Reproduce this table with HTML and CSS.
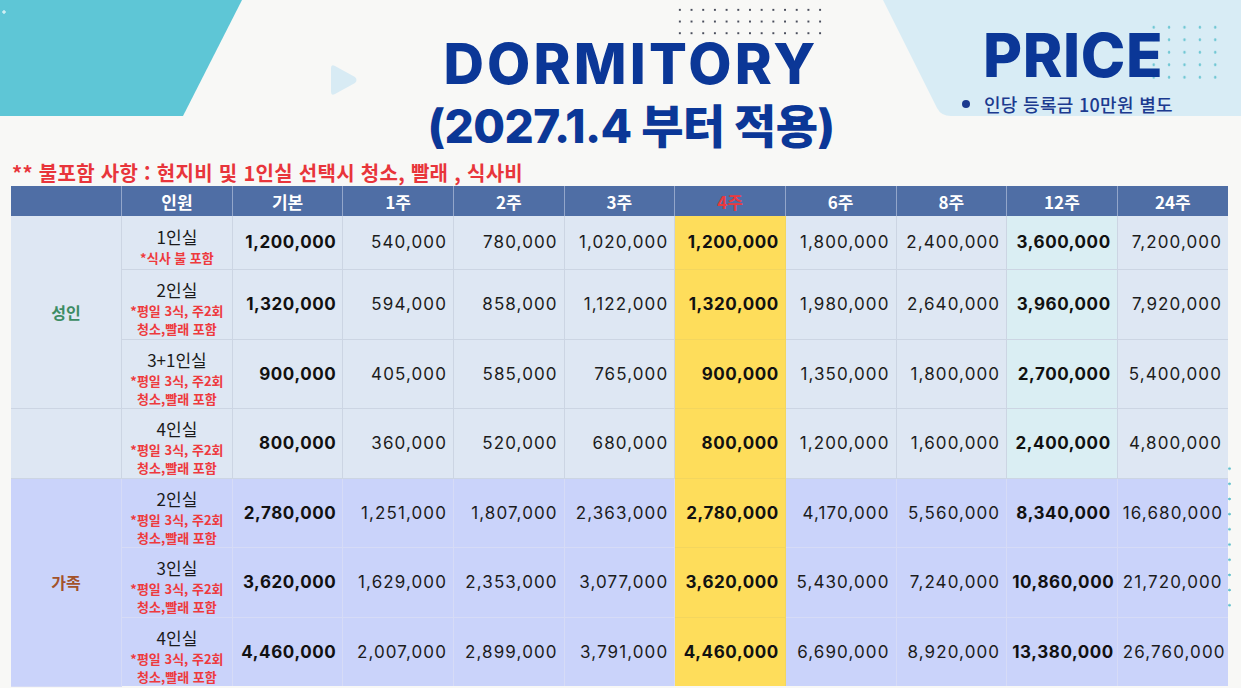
FILE: index.html
```html
<!DOCTYPE html>
<html lang="ko">
<head>
<meta charset="utf-8">
<title>Dormitory Price</title>
<link rel="stylesheet" href="styles.css">
</head>
<body>
<div class="page">
  <header class="header">
    <div class="deco-left"></div>
    <svg class="deco-play" viewBox="0 0 32 34" width="32" height="34"><path d="M4 5 Q4 1 8 3 L28 14 Q31 17 28 20 L8 31 Q4 33 4 29 Z" fill="#d8ebf4"/></svg>
    <div class="deco-dots-top"></div>
    <div class="title-block">
      <div class="title-main">DORMITORY</div>
      <div class="title-sub">(2027.1.4 부터 적용)</div>
    </div>
    <div class="panel">
      <div class="panel-dots"></div>
      <div class="price">PRICE</div>
      <div class="bullet"><span class="dot"></span>인당 등록금 10만원 별도</div>
    </div>
  </header>
  <p class="note">** 불포함 사항 : 현지비 및 1인실 선택시 청소, 빨래 , 식사비</p>
  <table class="price-table">
    <thead>
      <tr class="head-row">
        <th></th><th>인원</th><th>기본</th><th>1주</th><th>2주</th><th>3주</th><th class="red">4주</th><th>6주</th><th>8주</th><th>12주</th><th>24주</th>
      </tr>
    </thead>
    <tbody>
      <tr class="adult r1">
        <td class="group green" rowspan="3">성인</td>
        <td class="room">1인실<span class="sub">*식사 불 포함</span></td>
        <td class="num b">1,200,000</td><td class="num">540,000</td><td class="num">780,000</td><td class="num">1,020,000</td><td class="num b y">1,200,000</td><td class="num">1,800,000</td><td class="num">2,400,000</td><td class="num b c12">3,600,000</td><td class="num">7,200,000</td>
      </tr>
      <tr class="adult r2">
        <td class="room">2인실<span class="sub">*평일 3식, 주2회</span><span class="sub">청소,빨래 포함</span></td>
        <td class="num b">1,320,000</td><td class="num">594,000</td><td class="num">858,000</td><td class="num">1,122,000</td><td class="num b y">1,320,000</td><td class="num">1,980,000</td><td class="num">2,640,000</td><td class="num b c12">3,960,000</td><td class="num">7,920,000</td>
      </tr>
      <tr class="adult r3">
        <td class="room">3+1인실<span class="sub">*평일 3식, 주2회</span><span class="sub">청소,빨래 포함</span></td>
        <td class="num b">900,000</td><td class="num">405,000</td><td class="num">585,000</td><td class="num">765,000</td><td class="num b y">900,000</td><td class="num">1,350,000</td><td class="num">1,800,000</td><td class="num b c12">2,700,000</td><td class="num">5,400,000</td>
      </tr>
      <tr class="adult r4">
        <td class="group cont"></td>
        <td class="room">4인실<span class="sub">*평일 3식, 주2회</span><span class="sub">청소,빨래 포함</span></td>
        <td class="num b">800,000</td><td class="num">360,000</td><td class="num">520,000</td><td class="num">680,000</td><td class="num b y">800,000</td><td class="num">1,200,000</td><td class="num">1,600,000</td><td class="num b c12">2,400,000</td><td class="num">4,800,000</td>
      </tr>
      <tr class="family r5">
        <td class="group brown" rowspan="3">가족</td>
        <td class="room">2인실<span class="sub">*평일 3식, 주2회</span><span class="sub">청소,빨래 포함</span></td>
        <td class="num b">2,780,000</td><td class="num">1,251,000</td><td class="num">1,807,000</td><td class="num">2,363,000</td><td class="num b y">2,780,000</td><td class="num">4,170,000</td><td class="num">5,560,000</td><td class="num b">8,340,000</td><td class="num">16,680,000</td>
      </tr>
      <tr class="family r6">
        <td class="room">3인실<span class="sub">*평일 3식, 주2회</span><span class="sub">청소,빨래 포함</span></td>
        <td class="num b">3,620,000</td><td class="num">1,629,000</td><td class="num">2,353,000</td><td class="num">3,077,000</td><td class="num b y">3,620,000</td><td class="num">5,430,000</td><td class="num">7,240,000</td><td class="num b">10,860,000</td><td class="num">21,720,000</td>
      </tr>
      <tr class="family r7">
        <td class="room">4인실<span class="sub">*평일 3식, 주2회</span><span class="sub">청소,빨래 포함</span></td>
        <td class="num b">4,460,000</td><td class="num">2,007,000</td><td class="num">2,899,000</td><td class="num">3,791,000</td><td class="num b y">4,460,000</td><td class="num">6,690,000</td><td class="num">8,920,000</td><td class="num b">13,380,000</td><td class="num">26,760,000</td>
      </tr>
    </tbody>
  </table>
  <div class="deco-dots-side"></div>
</div>
</body>
</html>
```

FILE: styles.css
```css
* { box-sizing: border-box; }

body {
  margin: 0;
  background: #f8f8f6;
  font-family: "Noto Sans", "Noto Sans CJK KR", sans-serif;
}

.page {
  position: relative;
  width: 1241px;
  height: 688px;
  overflow: hidden;
}

/* ---------- header ---------- */
.header {
  position: relative;
  display: flex;
  align-items: flex-start;
  height: 160px;
}

.deco-left {
  flex: none;
  width: 242px;
  height: 116px;
  background:
    radial-gradient(circle at 4px 12px, #cfeef3 1.4px, transparent 2px),
    #5ec6d6;
  clip-path: polygon(0 0, 242px 0, 183px 116px, 0 116px);
}

.deco-play {
  position: absolute;
  left: 327px;
  top: 63px;
}

.deco-dots-top {
  position: absolute;
  left: 674px;
  top: 4px;
  width: 152px;
  height: 35px;
  background-image: radial-gradient(circle, #4a4e5c 0.9px, transparent 1.4px);
  background-size: 11.7px 11.7px;
}

.title-block {
  flex: 1;
  padding: 36px 0 0 145px;
  text-align: center;
  font-family: Inter, "Noto Sans CJK KR", sans-serif;
  font-weight: 800;
  color: #0b3797;
}

.title-main {
  font-size: 56px;
  line-height: 57px;
  letter-spacing: 3.2px;
}

.title-sub {
  font-size: 46px;
  line-height: 66px;
  letter-spacing: -0.6px;
}

.panel {
  position: relative;
  flex: none;
  width: 366px;
  height: 116px;
  padding: 25px 0 0 108px;
  background: #d8ecf5;
  clip-path: path('M8 0 L366 0 L366 116 L76 116 Q66 116 62 108 Z');
}

.panel-dots {
  position: absolute;
  left: 271px;
  top: 21px;
  width: 77px;
  height: 63px;
  background-image: radial-gradient(circle, #6cc6d2 1px, transparent 1.6px);
  background-size: 15.4px 12.5px;
}

.price {
  position: relative;
  font-family: Inter, sans-serif;
  font-weight: 800;
  font-size: 60px;
  line-height: 60px;
  letter-spacing: 0.6px;
  color: #0b3797;
}

.bullet {
  position: relative;
  display: flex;
  align-items: center;
  gap: 14px;
  margin: 8px 0 0 -21px;
  font-family: "Noto Sans CJK KR", sans-serif;
  font-size: 18px;
  font-weight: 500;
  line-height: 22px;
  letter-spacing: 0.3px;
  color: #1b3a8f;
}

.bullet .dot {
  width: 8px;
  height: 8px;
  border-radius: 50%;
  background: #1b3a8f;
}

/* ---------- note ---------- */
.note {
  margin: 0 0 0 12px;
  height: 26px;
  font-family: "Noto Sans CJK KR", sans-serif;
  font-size: 20px;
  font-weight: 700;
  line-height: 26px;
  letter-spacing: 0.3px;
  color: #e8353b;
}

/* ---------- table ---------- */
.price-table {
  margin-left: 11px;
  width: 1217px;
  border-collapse: collapse;
  table-layout: fixed;
}

.price-table th {
  height: 30px;
  padding: 0;
  background: #4f6ea5;
  color: #ffffff;
  font-family: "Noto Sans CJK KR", sans-serif;
  font-size: 17px;
  font-weight: 700;
  text-align: center;
  border-left: 1px solid #93a6ca;
}

.price-table th:first-child { border-left: none; }

.price-table th.red { color: #ea3a3e; }

.price-table td {
  border: 1px solid #ccd5e3;
  padding: 0;
  vertical-align: middle;
}

.adult td { background: #dee7f3; }
.family td { background: #cad3fa; border-color: #d6dbf6; }

.r1 { height: 53px; }
.r2, .r4, .r6 { height: 70px; }
.r3, .r5, .r7 { height: 69px; }

.price-table td.y { background: #fedd5b; border-color: #f3d65e; }
.price-table td.c12 { background: #daeef3; }

.group {
  text-align: center;
  font-family: "Noto Sans CJK KR", sans-serif;
  font-size: 16px;
  font-weight: 700;
}

.price-table tr:first-child td { border-top: none; }
.price-table td:first-child { border-left: none; }
.price-table td:last-child { border-right: none; }
.price-table tr:last-child td { border-bottom: none; }

.green { color: #3c8c63; }
.brown { color: #a3522a; }
.price-table td.cont { border-top-color: #dee7f3; }

.room {
  padding-top: 8px !important;
  text-align: center;
  font-family: "Noto Sans CJK KR", sans-serif;
  font-size: 17px;
  line-height: 24px;
  color: #1a1a1a;
}

.room .sub {
  display: block;
  font-size: 13px;
  font-weight: 700;
  line-height: 18px;
  color: #ee3a3d;
}

.num {
  padding: 0 6px 0 5px !important;
  text-align: right;
  white-space: nowrap;
  font-family: Inter, sans-serif;
  font-size: 17px;
  letter-spacing: 1.1px;
  color: #1c1c1c;
}

.num.b {
  font-weight: 700;
  letter-spacing: 0.6px;
  color: #111111;
}

.deco-dots-side {
  position: absolute;
  left: 1227px;
  top: 461px;
  width: 5px;
  height: 150px;
  background-image: radial-gradient(circle, #5fbfcd 1px, transparent 1.6px);
  background-size: 5px 15.2px;
}
```
